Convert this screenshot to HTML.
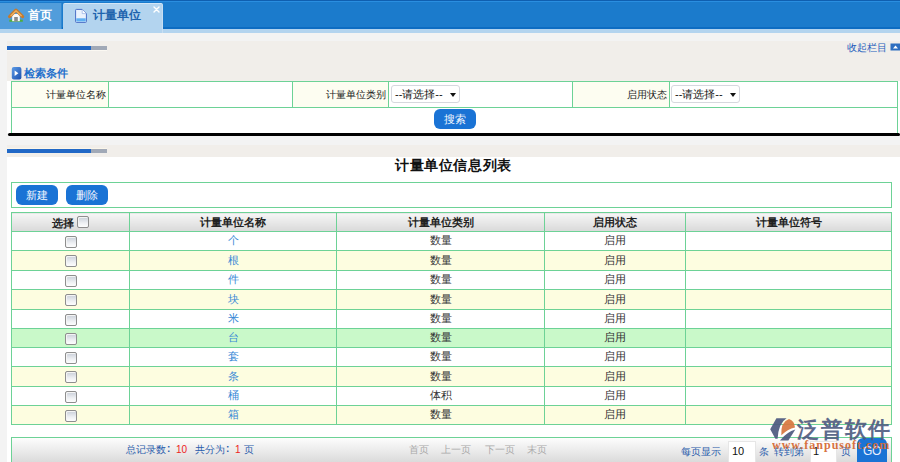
<!DOCTYPE html>
<html><head><meta charset="utf-8">
<style>
*{margin:0;padding:0;box-sizing:border-box}
html,body{width:900px;height:462px;overflow:hidden;background:#f3f3f3;font-family:"Liberation Sans",sans-serif;font-size:12px;color:#333}
.a{position:absolute}
#hdr{left:0;top:0;width:900px;height:29px;background:linear-gradient(#0f5fb0 0,#0f5fb0 1px,#2a8ee0 1px,#2a8ee0 2px,#1b7bcc 2px,#1b7bcc 27px,#0d6cc2 27px)}
#tab1{left:0;top:3px;width:62px;height:26px;background:#519ddb;border-right:1px solid #3088d2}
#tab2{left:63px;top:3px;width:100px;height:30px;background:#b3d4ef;border-radius:2px 2px 0 0;border-top:1px solid #d4e6f6;border-right:1px solid #c8def2}
#strip{left:0;top:29px;width:900px;height:4px;background:#b3d4ef}
.tt{font-weight:bold;font-size:12px;line-height:12px;white-space:nowrap}
.warm{background:#f1eeea}
.bar{height:4px;background:linear-gradient(90deg,#2168c6 0,#2168c6 84px,#a1a9b7 84px,#a1a9b7 100px)}
.g{border-color:#6dd296}
table.s{border-collapse:collapse;position:absolute;left:11px;top:81px;width:887px}
table.s td{border:1px solid #6dd296;height:26px;padding:0;font-size:10px;color:#222}
.lab{background:#fdfdf1;text-align:right;padding-right:2px!important}
.sel{position:absolute;height:18px;border:1px solid #d6d8de;border-radius:3px;background:#fff;font-size:11px;line-height:16px;padding-left:3px;white-space:nowrap;color:#111}
.sel:after{content:"";position:absolute;left:58px;top:7px;border-left:3.5px solid transparent;border-right:3.5px solid transparent;border-top:4px solid #111}
.btn{position:absolute;background:#1a73d5;color:#f4f8ff;border-radius:6px;text-align:center;font-size:10.5px}
table.d{border-collapse:collapse;position:absolute;left:11px;top:212px;width:881px;table-layout:fixed}
table.d td,table.d th{border:1px solid #6dd296;padding:0;text-align:center;font-size:11px;line-height:12px}
table.d th{height:19px;font-weight:bold;font-size:11px;color:#222;background:linear-gradient(#f6f6f6,#d9d9d9)}
table.d td{height:auto;padding-bottom:2px}
table.d tr.c td{background:#fdfde0}
table.d tr.h td{background:#c9f9c9}
.lk{color:#3a89d6}
.pg{font-size:10px;color:#2a5cab;white-space:nowrap}
.cb{display:inline-block;width:12px;height:12px;border:1px solid #8e8e8e;border-radius:2px;background:linear-gradient(#c9cfd8,#eef0f3 60%,#fdfdfd);box-shadow:inset 1px 1px 0 #f4f4f4;vertical-align:middle}
</style></head><body>
<div id="hdr" class="a"></div>
<div id="tab1" class="a"></div>
<div id="strip" class="a"></div>
<div id="tab2" class="a"></div>
<div class="a tt" style="left:28px;top:9px;color:#fff">首页</div>
<div class="a tt" style="left:93px;top:9px;color:#1e63ad">计量单位</div>
<svg class="a" style="left:0;top:0" width="900" height="34" viewBox="0 0 900 34">
<path d="M154 7 L159 12 M159 7 L154 12" stroke="#fff" stroke-width="1.4" stroke-linecap="round"/>
<path d="M9.3 19.8 Q16 18.5 22.8 19.8 L22.8 21.8 L9.3 21.8 Z" fill="#4fae3c"/>
<rect x="12.2" y="14" width="7.6" height="7.2" fill="#fafafa"/>
<rect x="14.2" y="17" width="3.6" height="4.5" fill="#8a8a8a"/>
<path d="M9.6 16.6 L16 10.2 L22.6 16.6" fill="none" stroke="#c77a2c" stroke-width="3.2" stroke-linejoin="round" stroke-linecap="round"/>
<path d="M10.6 16 L16 10.8 L21.6 16" fill="none" stroke="#eeb262" stroke-width="1.2" stroke-linejoin="round"/>
<path d="M75.6 10.2 Q75.6 9.4 76.4 9.4 L82.2 9.4 L86.4 13.6 L86.4 21.6 Q86.4 22.4 85.6 22.4 L76.4 22.4 Q75.6 22.4 75.6 21.6 Z" fill="#eaf2fd" stroke="#4b6fc6" stroke-width="1"/>
<path d="M82.2 9.6 L82.2 13.6 L86.2 13.6" fill="#fff" stroke="#9fb6e6" stroke-width="0.8"/>
<rect x="76.3" y="18.3" width="9.4" height="3.2" fill="#5fb0f2"/>
</svg>

<!-- panel 1 -->
<div class="a warm" style="left:7px;top:41px;width:893px;height:40px"></div>
<div class="a bar" style="left:7px;top:46px;width:100px"></div><div class="a" style="left:7px;top:50px;width:100px;height:1px;background:#fbf8f2"></div>
<div class="a" style="left:847px;top:41px;color:#2560bd;font-size:10px">收起栏目</div><svg class="a" style="left:890px;top:43px" width="10" height="9"><rect x="0.5" y="0.5" width="10" height="7" fill="#2f6fc0"/><path d="M3 5.5 L5.5 2.5 L8 5.5Z" fill="#fff"/></svg>
<svg class="a" style="left:11px;top:66px" width="12" height="15" viewBox="0 0 12 15"><defs><linearGradient id="sg" x1="0" y1="0" x2="1" y2="1"><stop offset="0" stop-color="#5d9be6"/><stop offset="1" stop-color="#1a4fae"/></linearGradient></defs><rect x="0.8" y="1" width="9.6" height="12.6" rx="2" fill="url(#sg)"/><path d="M3.6 4.6 L7.4 7.3 L3.6 10 Z" fill="#fff"/></svg>
<div class="a tt" style="left:24px;top:68px;font-size:11px;line-height:11px;color:#2470cc">检索条件</div>
<div class="a" style="left:7px;top:81px;width:893px;height:52px;background:#fff"></div>
<table class="s">
<tr><td class="lab" style="width:97px">计量单位名称</td><td style="width:184px"></td><td class="lab" style="width:96px">计量单位类别</td><td style="width:184px"></td><td class="lab" style="width:97px">启用状态</td><td></td></tr>
<tr><td colspan="6"></td></tr>
</table>
<div class="sel" style="left:391px;top:85px;width:69px">--请选择--</div>
<div class="sel" style="left:671px;top:85px;width:69px">--请选择--</div>
<div class="btn" style="left:434px;top:109px;width:42px;height:20px;line-height:20px;font-size:10.5px">搜索</div>
<div class="a" style="left:8px;top:133px;width:892px;height:3px;background:#000;border-radius:2px"></div>

<!-- panel 2 -->
<div class="a warm" style="left:7px;top:145px;width:893px;height:12px"></div>
<div class="a bar" style="left:7px;top:149px;width:100px"></div><div class="a" style="left:7px;top:148px;width:100px;height:1px;background:#fbf6ea"></div>
<div class="a" style="left:7px;top:157px;width:893px;height:305px;background:#fff"></div>
<div class="a" style="left:395px;top:157px;font-size:14px;letter-spacing:0.6px;font-weight:bold;color:#111">计量单位信息列表</div>
<div class="a" style="left:11px;top:182px;width:881px;height:26px;border:1px solid #6dd296"></div>
<div class="btn" style="left:16px;top:185px;width:42px;height:20px;line-height:20px">新建</div>
<div class="btn" style="left:66px;top:185px;width:42px;height:20px;line-height:20px">删除</div>

<table class="d">
<colgroup><col style="width:118px"><col style="width:207px"><col style="width:208px"><col style="width:141px"><col></colgroup>
<tr><th><span style="position:relative;top:2px">选择</span> <span class="cb" style="position:relative;top:-1px"></span></th><th>计量单位名称</th><th>计量单位类别</th><th>启用状态</th><th>计量单位符号</th></tr>
<tr style="height:19px"><td><span class="cb" style="position:relative;top:1px"></span></td><td class="lk">个</td><td>数量</td><td>启用</td><td></td></tr>
<tr style="height:20px" class="c"><td><span class="cb" style="position:relative;top:1px"></span></td><td class="lk">根</td><td>数量</td><td>启用</td><td></td></tr>
<tr style="height:19px"><td><span class="cb" style="position:relative;top:1px"></span></td><td class="lk">件</td><td>数量</td><td>启用</td><td></td></tr>
<tr style="height:20px" class="c"><td><span class="cb" style="position:relative;top:1px"></span></td><td class="lk">块</td><td>数量</td><td>启用</td><td></td></tr>
<tr style="height:19px"><td><span class="cb" style="position:relative;top:1px"></span></td><td class="lk">米</td><td>数量</td><td>启用</td><td></td></tr>
<tr style="height:19px" class="h"><td><span class="cb" style="position:relative;top:1px"></span></td><td class="lk">台</td><td>数量</td><td>启用</td><td></td></tr>
<tr style="height:19px"><td><span class="cb" style="position:relative;top:1px"></span></td><td class="lk">套</td><td>数量</td><td>启用</td><td></td></tr>
<tr style="height:20px" class="c"><td><span class="cb" style="position:relative;top:1px"></span></td><td class="lk">条</td><td>数量</td><td>启用</td><td></td></tr>
<tr style="height:19px"><td><span class="cb" style="position:relative;top:1px"></span></td><td class="lk">桶</td><td>体积</td><td>启用</td><td></td></tr>
<tr style="height:19px" class="c"><td><span class="cb" style="position:relative;top:1px"></span></td><td class="lk">箱</td><td>数量</td><td>启用</td><td></td></tr>
</table>

<!-- pager -->
<div class="a" style="left:11px;top:437px;width:881px;height:30px;border:1px solid #6dd296;background:linear-gradient(#fdfdfd,#d5d5d5)"></div>
<div class="a pg" style="left:126px;top:443px">总记录数</div><div class="a pg" style="left:167px;top:443px;font-weight:bold">:</div>
<div class="a pg" style="left:176px;top:444px;color:#e22">10</div>
<div class="a pg" style="left:195px;top:443px">共分为</div><div class="a pg" style="left:226px;top:443px;font-weight:bold">:</div>
<div class="a pg" style="left:235px;top:444px;color:#e22">1</div>
<div class="a pg" style="left:244px;top:443px">页</div>
<div class="a pg" style="left:409px;top:443px;color:#aaa">首页</div>
<div class="a pg" style="left:441px;top:443px;color:#aaa">上一页</div>
<div class="a pg" style="left:485px;top:443px;color:#aaa">下一页</div>
<div class="a pg" style="left:527px;top:443px;color:#aaa">末页</div>
<div class="a pg" style="left:681px;top:445px">每页显示</div>
<div class="a" style="left:728px;top:441px;width:28px;height:22px;background:#fff;border:1px solid #e6e6e6;padding:3px 0 0 3px;font-size:11px;color:#111">10</div>
<div class="a pg" style="left:759px;top:445px">条</div>
<div class="a pg" style="left:774px;top:445px">转到第</div>
<div class="a" style="left:810px;top:441px;width:27px;height:22px;background:#fff;border:1px solid #e6e6e6;padding:3px 0 0 2px;font-size:11px;color:#111">1</div>
<div class="a pg" style="left:841px;top:445px">页</div>
<div class="btn" style="left:857px;top:438px;width:30px;height:30px;line-height:27px;font-size:12px;color:#e8f0ff;transform-origin:center;letter-spacing:-0.3px">GO</div>
<svg class="a" style="left:766px;top:414px;opacity:0.92" width="34" height="30" viewBox="0 0 34 30">
<path d="M10.4 4.2 L20.6 4.2 Q12.5 9 11.6 24.8 L9.4 24.8 L4.2 15.3 Z" fill="#4d5a80"/>
<path d="M15.3 21.2 Q14.5 8 23 5 Q28.5 7 29 13.4 Q21.5 15 15.3 21.2 Z" fill="#d9773f"/>
<path d="M14 26.4 L22.4 26.4 L29.3 15.6 Q21 18 14 26.4 Z" fill="#4d5a80"/>
</svg>
<div class="a" style="left:797px;top:417px;font-size:22px;line-height:26px;letter-spacing:1.8px;font-weight:bold;color:#4d5a80;opacity:0.9;white-space:nowrap">泛普软件</div>
<div class="a" style="left:772px;top:438px;font-family:'Liberation Serif',serif;font-size:12px;line-height:14px;letter-spacing:1px;font-weight:bold;color:#d66c38;opacity:0.95;white-space:nowrap">www.fanpusoft.com</div>
</body></html>
